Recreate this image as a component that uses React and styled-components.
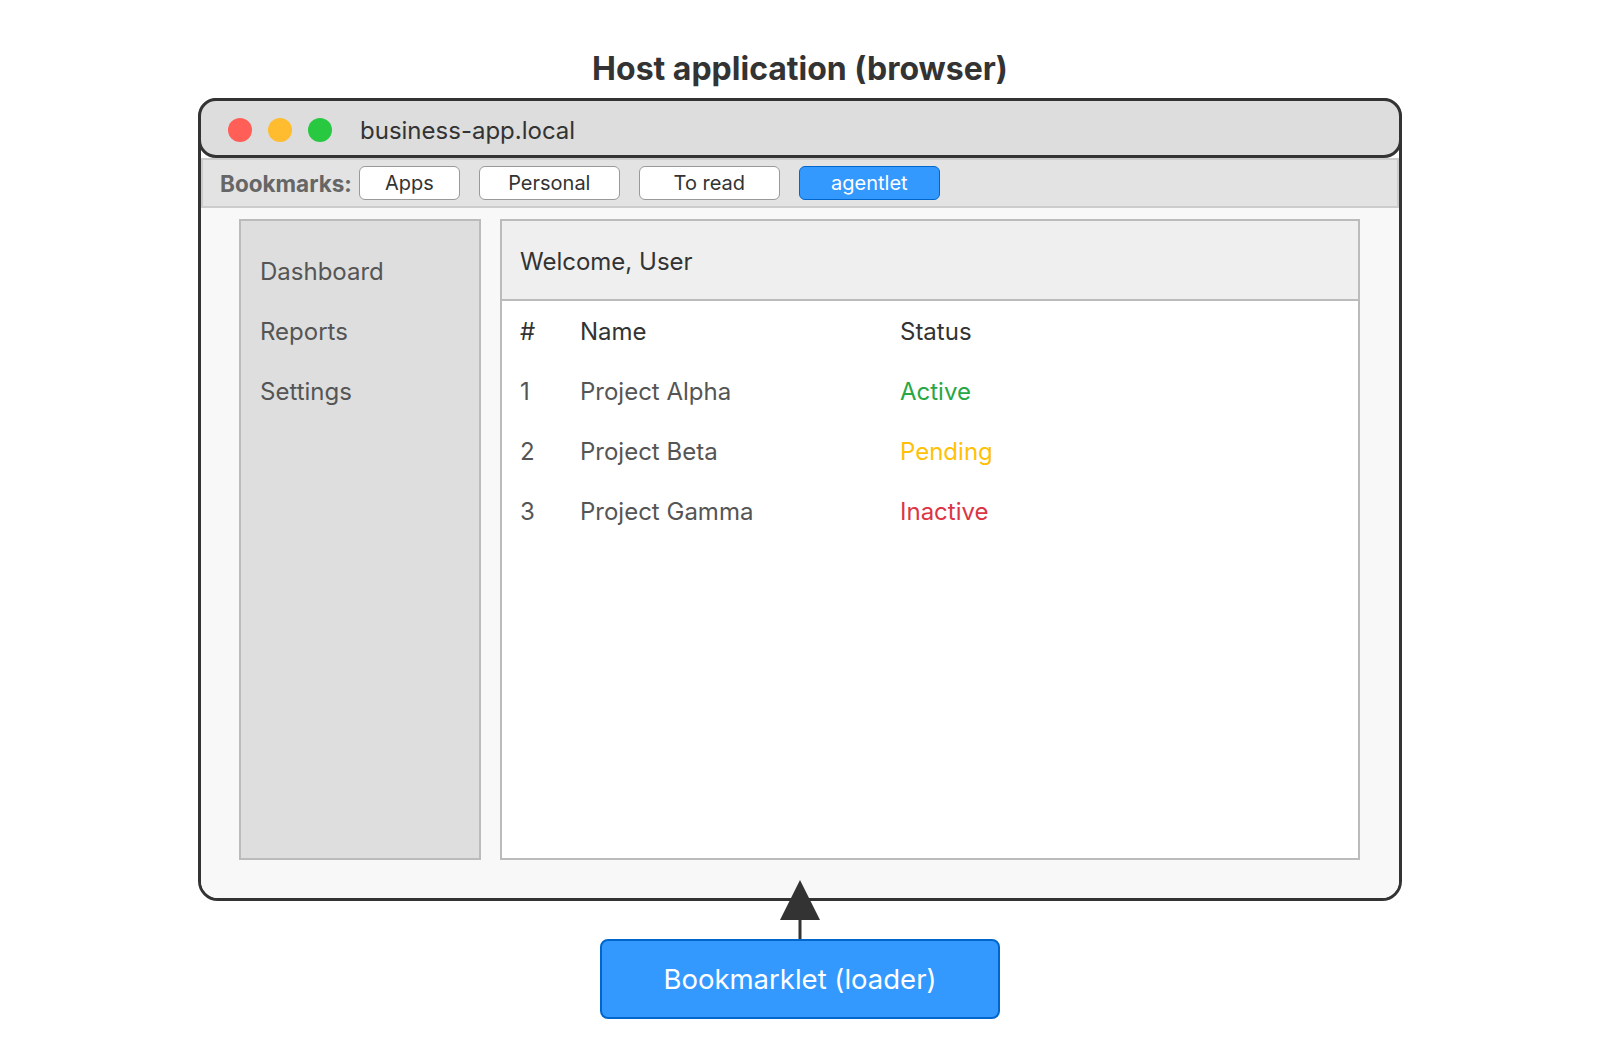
import React from "react";
import styled, { createGlobalStyle } from "styled-components";

const GlobalStyle = createGlobalStyle`
  html, body {
    margin: 0;
    padding: 0;
    background: #ffffff;
  }
  body {
    font-family: Inter, "Noto Sans", "Liberation Sans", sans-serif;
    color: #333;
  }
  * { box-sizing: border-box; }
`;

const Page = styled.div`
  width: 1600px;
  height: 1060px;
  display: flex;
  flex-direction: column;
  align-items: center;
  padding-top: 51px;
`;

const Heading = styled.h1`
  margin: 0 0 11px;
  font-size: 32px;
  line-height: 36px;
  font-weight: 700;
  color: #333;
`;

const Window = styled.div`
  width: 1204px;
  height: 803px;
  border: 3px solid #333;
  border-radius: 20px;
  background: #ffffff;
  display: flex;
  flex-direction: column;
`;

const TitleBar = styled.div`
  height: 60px;
  margin: -3px -3px 0;
  border: 3px solid #333;
  border-radius: 18px;
  background: #dddddd;
  display: flex;
  align-items: center;
  padding: 4px 0 0 27px;
  flex-shrink: 0;
`;

const Light = styled.span`
  width: 24px;
  height: 24px;
  border-radius: 50%;
  background: ${(p) => p.$color};
  margin-right: 16px;
  flex-shrink: 0;
`;

const Address = styled.span`
  margin-left: 12px;
  font-size: 24px;
  color: #333;
`;

const BookmarkBar = styled.div`
  height: 50px;
  background: #e3e3e3;
  border: 2px solid #cccccc;
  display: flex;
  align-items: center;
  padding-left: 17px;
  gap: 19px;
  flex-shrink: 0;
`;

const BookmarkLabel = styled.span`
  font-size: 22.5px;
  font-weight: 700;
  color: #666;
  margin-right: -12px;
`;

const Bookmark = styled.span`
  width: ${(p) => p.$w}px;
  height: 34px;
  border-radius: 6px;
  border: 1.5px solid ${(p) => (p.$active ? "#0066cc" : "#999")};
  background: ${(p) => (p.$active ? "#3399ff" : "#ffffff")};
  color: ${(p) => (p.$active ? "#ffffff" : "#333")};
  font-size: 20px;
  display: flex;
  align-items: center;
  justify-content: center;
`;

const Content = styled.div`
  flex: 1;
  background: #f8f8f8;
  display: flex;
  gap: 19px;
  padding: 11px 39px 38px 38px;
  border-bottom-left-radius: 17px;
  border-bottom-right-radius: 17px;
`;

const Sidebar = styled.nav`
  width: 242px;
  background: #dedede;
  border: 2px solid #bbbbbb;
  display: flex;
  flex-direction: column;
  padding: 21px 0 0 19px;
`;

const NavItem = styled.div`
  height: 60px;
  line-height: 60px;
  font-size: 24px;
  color: #555;
`;

const Panel = styled.main`
  flex: 1;
  background: #ffffff;
  border: 2px solid #bbbbbb;
  display: flex;
  flex-direction: column;
`;

const PanelHeader = styled.div`
  height: 80px;
  background: #efefef;
  border-bottom: 2px solid #bbbbbb;
  display: flex;
  align-items: center;
  padding: 2px 0 0 18px;
  font-size: 24px;
  color: #333;
  flex-shrink: 0;
`;

const Table = styled.div`
  display: grid;
  grid-template-columns: 60px 320px 1fr;
  grid-auto-rows: 60px;
  padding: 0 0 0 18px;
  align-items: center;
  font-size: 24px;
`;

const Cell = styled.div`
  color: ${(p) => p.$color || "#555"};
`;

const HeadCell = styled.div`
  color: #333;
`;

const Connector = styled.svg`
  display: block;
  position: relative;
  margin-top: -21px;
  flex-shrink: 0;
`;

const Loader = styled.div`
  width: 400px;
  height: 80px;
  background: #3399ff;
  border: 2px solid #0066cc;
  border-radius: 8px;
  display: flex;
  align-items: center;
  justify-content: center;
  color: #ffffff;
  font-size: 27.5px;
`;

const rows = [
  { id: 1, name: "Project Alpha", status: "Active", color: "#28a745" },
  { id: 2, name: "Project Beta", status: "Pending", color: "#ffc107" },
  { id: 3, name: "Project Gamma", status: "Inactive", color: "#dc3545" },
];

export default function App() {
  return (
    <>
      <GlobalStyle />
      <Page>
        <Heading>Host application (browser)</Heading>
        <Window>
          <TitleBar>
            <Light $color="#ff5f57" />
            <Light $color="#febc2e" />
            <Light $color="#28c840" />
            <Address>business-app.local</Address>
          </TitleBar>
          <BookmarkBar>
            <BookmarkLabel>Bookmarks:</BookmarkLabel>
            <Bookmark $w={101}>Apps</Bookmark>
            <Bookmark $w={141}>Personal</Bookmark>
            <Bookmark $w={141}>To read</Bookmark>
            <Bookmark $w={141} $active>agentlet</Bookmark>
          </BookmarkBar>
          <Content>
            <Sidebar>
              <NavItem>Dashboard</NavItem>
              <NavItem>Reports</NavItem>
              <NavItem>Settings</NavItem>
            </Sidebar>
            <Panel>
              <PanelHeader>Welcome, User</PanelHeader>
              <Table>
                <HeadCell>#</HeadCell>
                <HeadCell>Name</HeadCell>
                <HeadCell>Status</HeadCell>
                {rows.map((r) => (
                  <React.Fragment key={r.id}>
                    <Cell>{r.id}</Cell>
                    <Cell>{r.name}</Cell>
                    <Cell $color={r.color}>{r.status}</Cell>
                  </React.Fragment>
                ))}
              </Table>
            </Panel>
          </Content>
        </Window>
        <Connector width="40" height="59" viewBox="0 0 40 59">
          <polygon points="20,0 40,40 0,40" fill="#333" />
          <rect x="18.5" y="39" width="3" height="20" fill="#333" />
        </Connector>
        <Loader>Bookmarklet (loader)</Loader>
      </Page>
    </>
  );
}
